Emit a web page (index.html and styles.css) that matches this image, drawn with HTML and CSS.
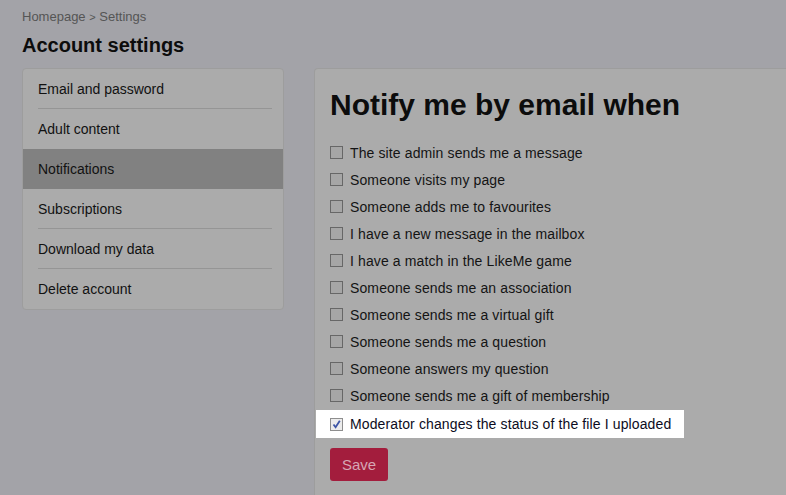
FILE: index.html
```html
<!DOCTYPE html>
<html lang="en">
<head>
<meta charset="utf-8">
<title>Account settings</title>
<link rel="stylesheet" href="styles.css">
</head>
<body>
<div class="page">
  <div class="crumbs">Homepage <span class="sep">&gt;</span> Settings</div>
  <h1 class="title">Account settings</h1>
  <div class="columns">
    <nav class="sidebar">
      <div class="item"><span class="label">Email and password</span></div>
      <div class="item last-before-active"><span class="label">Adult content</span></div>
      <div class="item active"><span class="label">Notifications</span></div>
      <div class="item"><span class="label">Subscriptions</span></div>
      <div class="item"><span class="label">Download my data</span></div>
      <div class="item last"><span class="label">Delete account</span></div>
    </nav>
    <main class="panel">
      <h2 class="heading">Notify me by email when</h2>
      <div class="options">
        <div class="opt"><span class="box"></span><span>The site admin sends me a message</span></div>
        <div class="opt"><span class="box"></span><span>Someone visits my page</span></div>
        <div class="opt"><span class="box"></span><span>Someone adds me to favourites</span></div>
        <div class="opt"><span class="box"></span><span>I have a new message in the mailbox</span></div>
        <div class="opt"><span class="box"></span><span>I have a match in the LikeMe game</span></div>
        <div class="opt"><span class="box"></span><span>Someone sends me an association</span></div>
        <div class="opt"><span class="box"></span><span>Someone sends me a virtual gift</span></div>
        <div class="opt"><span class="box"></span><span>Someone sends me a question</span></div>
        <div class="opt"><span class="box"></span><span>Someone answers my question</span></div>
        <div class="opt"><span class="box"></span><span>Someone sends me a gift of membership</span></div>
        <div class="opt highlight"><span class="box checked"><svg width="11" height="11" viewBox="0 0 11 11"><path d="M2.5 5.5 L4.6 8.2 L8.8 1.8" fill="none" stroke="#3d55a6" stroke-width="1.8"/></svg></span><span>Moderator changes the status of the file I uploaded</span></div>
      </div>
      <button class="save" type="button">Save</button>
    </main>
  </div>
</div>
</body>
</html>
```

FILE: styles.css
```css
html, body {
  margin: 0;
  padding: 0;
  height: 100%;
  overflow: hidden;
}
body {
  background: #a3a3a8;
  font-family: "Liberation Sans", Arial, sans-serif;
  color: #111;
}
.page {
  padding: 9px 0 0 22px;
}
.crumbs {
  font-size: 13px;
  line-height: 16px;
  color: #555;
}
.crumbs .sep {
  font-size: 11px;
}
.title {
  margin: 8px 0 11px;
  font-size: 20px;
  line-height: 24px;
  font-weight: bold;
  color: #0c0c0c;
}
.columns {
  display: flex;
  align-items: flex-start;
  gap: 30px;
}
.sidebar {
  width: 260px;
  flex: none;
  background: #ababab;
  border: 1px solid #9d9d9d;
  border-radius: 4px;
  overflow: hidden;
}
.item {
  height: 40px;
  padding: 0 11px 0 15px;
  font-size: 14px;
  color: #111;
}
.item .label {
  display: flex;
  align-items: center;
  height: 39px;
  border-bottom: 1px solid #959595;
}
.item.last-before-active .label,
.item.active .label,
.item.last .label {
  border-bottom-color: transparent;
}
.item.active {
  background: #818181;
}
.panel {
  width: 480px;
  flex: none;
  background: #ababab;
  border: 1px solid #9d9d9d;
  border-right: none;
  border-radius: 4px 0 0 0;
  padding: 18px 0 14px 15px;
}
.heading {
  margin: 0 0 16px;
  font-size: 30px;
  line-height: 36px;
  font-weight: bold;
  color: #0c0c0c;
}
.options {
  display: flex;
  flex-direction: column;
  align-items: flex-start;
}
.opt {
  display: flex;
  align-items: center;
  gap: 7px;
  height: 27px;
  font-size: 14px;
  letter-spacing: 0.12px;
  color: #141414;
}
.opt.highlight {
  height: 28px;
  margin-top: 1px;
  background: #fff;
  margin-left: -14px;
  padding: 0 13px 0 14px;
  color: #0c0c22;
}
.box {
  width: 11px;
  height: 11px;
  border: 1px solid #676767;
  background: #a6a6a6;
  flex: none;
  display: flex;
  align-items: center;
  justify-content: center;
}
.box.checked {
  border-color: #8e8e8e;
  background: #ececec;
}
.save {
  margin-top: 10px;
  width: 58px;
  height: 33px;
  border: none;
  border-radius: 3px;
  background: #a31d3d;
  color: #d6a6b4;
  font-family: "Liberation Sans", Arial, sans-serif;
  font-size: 15px;
  padding: 0;
}
```
